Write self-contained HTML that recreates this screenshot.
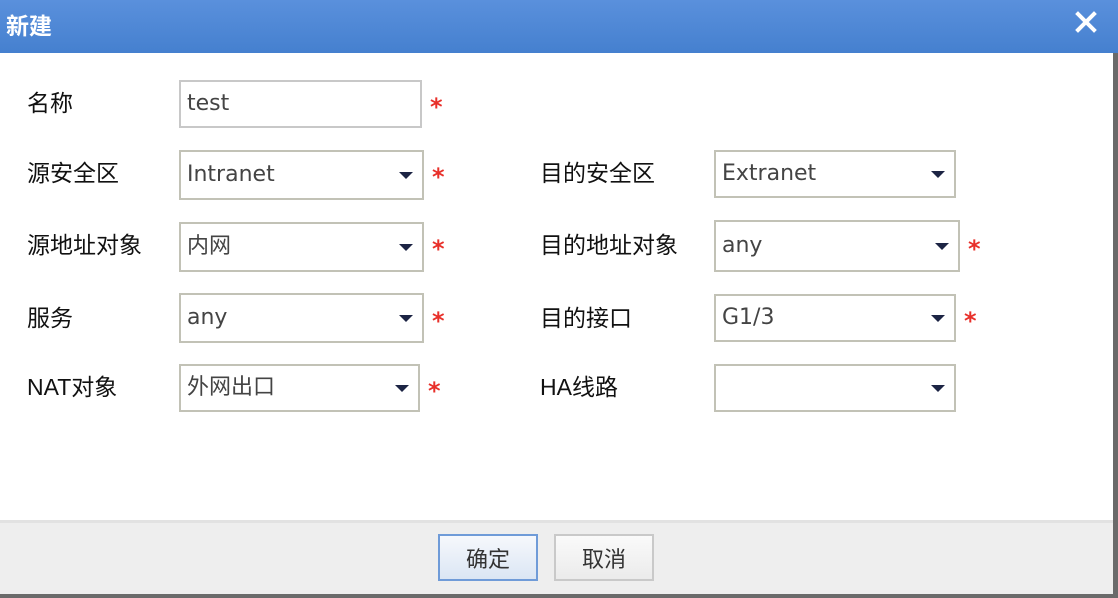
<!DOCTYPE html>
<html><head><meta charset="utf-8"><style>
*{margin:0;padding:0;box-sizing:border-box}
body{width:1118px;height:598px;overflow:hidden;background:#fff;position:relative;font-family:"DejaVu Sans","Noto Sans CJK SC",sans-serif}
.hd{position:absolute;left:0;top:0;width:1118px;height:53px;background:linear-gradient(#5a90dc,#4580cf)}
.hd .t{position:absolute;left:6px;top:7px;color:#fff;font-size:23px;font-weight:bold;font-family:"Noto Sans CJK SC",sans-serif}
.x{position:absolute;left:1074px;top:10px;width:24px;height:24px}
.rb{position:absolute;left:1113px;top:53px;width:5px;height:545px;background:#6a6a6a}
.bb{position:absolute;left:0;top:594px;width:1118px;height:4px;background:#6a6a6a}
.ft{position:absolute;left:0;top:520px;width:1113px;height:74px;background:#eeeeee;border-top:3px solid #e2e2e2}
.l{position:absolute;font-size:23px;color:#111;font-family:"Liberation Sans","Noto Sans CJK SC",sans-serif;line-height:1}
.f{position:absolute;border:2px solid #c2c2b6;background:#fff;font-size:22px;color:#444;padding-left:6px;line-height:1}
.f span{position:absolute;left:6px;top:50%;transform:translateY(-50%)}
.f i{position:absolute;right:9px;top:50%;margin-top:-3px;width:0;height:0;border-left:7px solid transparent;border-right:7px solid transparent;border-top:7px solid #1c2444}
.s{position:absolute;color:#e8302a;font-size:24px;font-weight:bold;line-height:1}
.btn{position:absolute;top:534px;width:100px;height:47px;font-size:22px;color:#333;text-align:center;line-height:44px;font-family:"Noto Sans CJK SC",sans-serif}
</style></head><body>
<div class="hd"><div class="t">新建</div>
<svg class="x" viewBox="0 0 24 24"><path d="M4 4L20 20M20 4L4 20" stroke="#fff" stroke-width="4" stroke-linecap="square"/></svg></div>
<div class="rb"></div><div class="bb"></div>

<div class="l" style="left:27px;top:92px">名称</div>
<div class="f" style="left:179px;top:80px;width:243px;height:48px;border-color:#c8c8c8"><span>test</span></div>
<div class="s" style="left:430px;top:95px">*</div>

<div class="l" style="left:27px;top:162px">源安全区</div>
<div class="f" style="left:179px;top:150px;width:245px;height:50px"><span>Intranet</span><i></i></div>
<div class="s" style="left:432px;top:165px">*</div>
<div class="l" style="left:540px;top:162px">目的安全区</div>
<div class="f" style="left:714px;top:150px;width:242px;height:48px"><span>Extranet</span><i></i></div>

<div class="l" style="left:27px;top:234px">源地址对象</div>
<div class="f" style="left:179px;top:222px;width:245px;height:50px"><span>内网</span><i></i></div>
<div class="s" style="left:432px;top:237px">*</div>
<div class="l" style="left:540px;top:234px">目的地址对象</div>
<div class="f" style="left:714px;top:220px;width:246px;height:52px"><span>any</span><i></i></div>
<div class="s" style="left:968px;top:237px">*</div>

<div class="l" style="left:27px;top:307px">服务</div>
<div class="f" style="left:179px;top:293px;width:245px;height:50px"><span>any</span><i></i></div>
<div class="s" style="left:432px;top:309px">*</div>
<div class="l" style="left:540px;top:307px">目的接口</div>
<div class="f" style="left:714px;top:294px;width:242px;height:48px"><span>G1/3</span><i></i></div>
<div class="s" style="left:964px;top:309px">*</div>

<div class="l" style="left:27px;top:376px">NAT对象</div>
<div class="f" style="left:179px;top:364px;width:241px;height:48px"><span>外网出口</span><i></i></div>
<div class="s" style="left:428px;top:379px">*</div>
<div class="l" style="left:540px;top:376px">HA线路</div>
<div class="f" style="left:714px;top:364px;width:242px;height:48px"><i></i></div>

<div class="ft"></div>
<div class="btn" style="left:438px;border:2px solid #6f9bd8;background:linear-gradient(#f6f8fc,#dbe6f4)">确定</div>
<div class="btn" style="left:554px;border:2px solid #c9c9c9;background:linear-gradient(#fafafa,#ebebeb)">取消</div>
</body></html>
